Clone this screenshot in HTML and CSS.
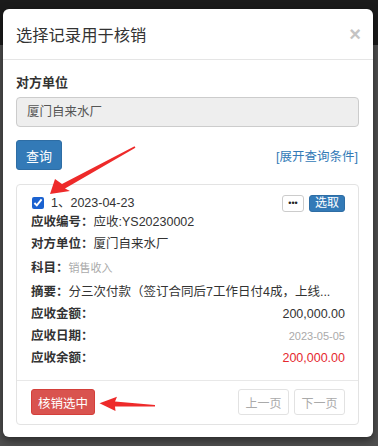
FILE: index.html
```html
<!DOCTYPE html>
<html lang="zh-CN">
<head>
    <meta charset="UTF-8">
    <title>选择记录用于核销</title>
    <link rel="stylesheet" href="styles.css">
</head>
<body>
    <div class="modal">
        <div class="modal-header">
            <h4 class="modal-title">选择记录用于核销</h4>
            <span class="close">&times;</span>
        </div>

        <div class="modal-body">
            <label class="campo-label">对方单位</label>
            <div class="campo-input">厦门自来水厂</div>

            <div class="barra-busqueda">
                <button class="btn btn-primary">查询</button>
                <a class="link-expandir">[展开查询条件]</a>
            </div>

            <div class="panel">
                <div class="panel-body">
                    <div class="fila fila-titulo">
                        <label class="check">
                            <input type="checkbox" checked>
                            <span>1、2023-04-23</span>
                        </label>
                        <div class="acciones">
                            <button class="btn-mini btn-mas">&bull;&bull;&bull;</button>
                            <button class="btn-mini btn-elegir">选取</button>
                        </div>
                    </div>
                    <div class="fila"><b>应收编号：</b>应收:YS20230002</div>
                    <div class="fila"><b>对方单位：</b>厦门自来水厂</div>
                    <div class="fila fila-cuenta"><b>科目：</b><span class="gris-chico">销售收入</span></div>
                    <div class="fila"><b>摘要：</b>分三次付款（签订合同后7工作日付4成，上线...</div>
                    <div class="fila fila-split"><b>应收金额：</b><span>200,000.00</span></div>
                    <div class="fila fila-split"><b>应收日期：</b><span class="gris-chico">2023-05-05</span></div>
                    <div class="fila fila-split"><b>应收余额：</b><span class="rojo">200,000.00</span></div>
                </div>
                <div class="panel-footer">
                    <button class="btn btn-danger">核销选中</button>
                    <div class="paginador">
                        <button class="btn btn-pagina">上一页</button>
                        <button class="btn btn-pagina">下一页</button>
                    </div>
                </div>
            </div>
        </div>
    </div>

    <!-- flechas de anotación -->
    <svg class="flechas" width="378" height="446" viewBox="0 0 378 446">
        <polygon points="50,194 70,191 65,188.5 135.4,147.7 134.6,146.3 62,184 55,179" fill="#ee2a2a"/>
        <polygon points="99.5,403.3 117,396.7 115,401.5 155,405 155,406.4 115,406.5 115.5,411" fill="#ee2a2a"/>
    </svg>
</body>
</html>
```
FILE: styles.css
```css
body {
    margin: 0;
    width: 378px;
    height: 446px;
    overflow: hidden;
    font-family: "Liberation Sans", "Noto Sans CJK SC", sans-serif;
    font-size: 12.5px;
    color: #333;
    background: linear-gradient(#1b1b1b 0, #1b1b1b 45px, #4f4f4f 45px);
    position: relative;
}

.modal {
    margin: 9px 5px 0 3px;
    width: 370px;
    background-color: #fff;
    border-radius: 6px;
    box-shadow: 0 3px 9px rgba(0, 0, 0, 0.5);
}

.modal-header {
    height: 50px;
    padding: 0 12px 0 13px;
    display: flex;
    align-items: center;
    justify-content: space-between;
    border-bottom: 1px solid #e5e5e5;
}

.modal-title {
    margin: 0;
    font-size: 16.3px;
    font-weight: normal;
    color: #333;
}

.close {
    font-size: 20px;
    font-weight: bold;
    color: #c4c4c4;
    line-height: 1;
}

.modal-body {
    padding: 14px 14px 12px 13px;
}

.campo-label {
    display: block;
    font-size: 13px;
    font-weight: bold;
    line-height: 18px;
    margin-bottom: 5px;
}

.campo-input {
    height: 28px;
    line-height: 28px;
    padding: 0 10px;
    background-color: #eee;
    border: 1px solid #ccc;
    border-radius: 4px;
    color: #555;
}

.barra-busqueda {
    margin-top: 13px;
    display: flex;
    align-items: center;
    justify-content: space-between;
}

.btn {
    font-family: inherit;
    border: 1px solid transparent;
    border-radius: 3px;
    cursor: pointer;
}

.btn-primary {
    height: 30px;
    padding: 0 9px;
    font-size: 13px;
    background-color: #337ab7;
    border-color: #2e6da4;
    color: #fff;
}

.link-expandir {
    color: #337ab7;
    font-size: 12.5px;
    margin-right: 1px;
}

.panel {
    margin-top: 14px;
    border: 1px solid #e3e3e3;
    border-radius: 4px;
}

.panel-body {
    padding: 10px 13px 11px 14px;
}

.fila {
    line-height: 22px;
    white-space: nowrap;
}

.fila b {
    font-weight: bold;
}

.fila-titulo {
    height: 16px;
    line-height: 16px;
    display: flex;
    align-items: center;
    justify-content: space-between;
}

.check {
    display: flex;
    align-items: center;
    font-size: 12.5px;
}

.check input {
    width: 12px;
    height: 12px;
    margin: 0 7px 0 1px;
    accent-color: #1b62d0;
}

.acciones {
    display: flex;
    gap: 5px;
}

.btn-mini {
    height: 17px;
    font-family: inherit;
    font-size: 12px;
    border-radius: 3px;
    padding: 0 5px;
    line-height: 15px;
    border: 1px solid #ccc;
}

.btn-mas {
    width: 22px;
    padding: 0;
    background-color: #fff;
    font-size: 9px;
    color: #222;
}

.btn-elegir {
    background-color: #337ab7;
    border-color: #2e6da4;
    color: #fff;
}

.fila-cuenta {
    line-height: 26px;
}

.gris-chico {
    font-size: 11px;
    color: #aaa;
}

.fila-split {
    display: flex;
    justify-content: space-between;
}

.rojo {
    color: #e5282e;
}

.panel-footer {
    border-top: 1px solid #e8e8e8;
    padding: 8px 13px 9px 14px;
    display: flex;
    align-items: center;
    justify-content: space-between;
}

.btn-danger {
    height: 26px;
    padding: 0 6px;
    font-size: 12.5px;
    background-color: #d9534f;
    border-color: #d43f3a;
    color: #fff;
}

.paginador {
    display: flex;
    gap: 5px;
}

.btn-pagina {
    height: 26px;
    width: 51px;
    padding: 0;
    font-size: 12px;
    background-color: #fff;
    border-color: #e2e2e2;
    color: #aaa;
}

.flechas {
    position: absolute;
    top: 0;
    left: 0;
    pointer-events: none;
}
```
